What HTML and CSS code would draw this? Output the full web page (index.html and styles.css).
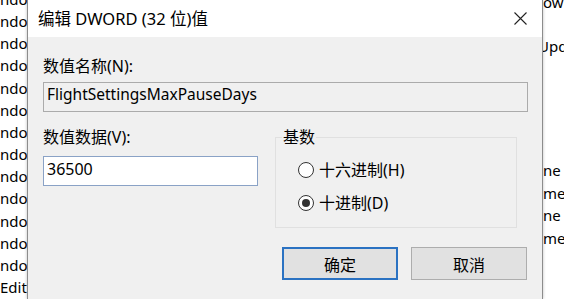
FILE: index.html
```html
<!DOCTYPE html>
<html lang="zh-CN">
<head>
<meta charset="utf-8">
<title>编辑 DWORD (32 位)值</title>
<link rel="stylesheet" href="styles.css">
</head>
<body>
<div class="desk">
  <div class="pane pane-left">
    <div class="row">ndo</div>
    <div class="row">ndo</div>
    <div class="row">ndo</div>
    <div class="row">ndo</div>
    <div class="row">ndo</div>
    <div class="row">ndo</div>
    <div class="row">ndo</div>
    <div class="row">ndo</div>
    <div class="row">ndo</div>
    <div class="row">ndo</div>
    <div class="row">ndo</div>
    <div class="row">ndo</div>
    <div class="row">ndo</div>
    <div class="row">Edit</div>
  </div>
  <div class="dialog">
    <div class="titlebar">
      <span class="title">编辑 DWORD (32 位)值</span>
      <svg class="close" width="13" height="13" viewBox="0 0 13 13">
        <path d="M0.5 0.5 L12.5 12.5 M12.5 0.5 L0.5 12.5" stroke="#222" stroke-width="1.1" fill="none"/>
      </svg>
    </div>
    <div class="body">
      <div class="label">数值名称(N):</div>
      <div class="field field-name">FlightSettingsMaxPauseDays</div>
      <div class="grid">
        <div class="col">
          <div class="label">数值数据(V):</div>
          <div class="field field-data">36500</div>
        </div>
        <div class="group">
          <div class="group-title">基数</div>
          <div class="radio"><span class="circle"></span><span>十六进制(H)</span></div>
          <div class="radio"><span class="circle checked"></span><span>十进制(D)</span></div>
        </div>
      </div>
      <div class="buttons">
        <button class="btn btn-default">确定</button>
        <button class="btn">取消</button>
      </div>
    </div>
  </div>
  <div class="pane pane-right">
    <div class="row row-first">ow</div>
    <div class="row"></div>
    <div class="row row-cut">Upd</div>
    <div class="rgroup">
      <div class="row">ne</div>
      <div class="row">me</div>
      <div class="row">ne</div>
      <div class="row">me</div>
    </div>
  </div>
</div>
</body>
</html>
```

FILE: styles.css
```css
html, body {
  margin: 0;
  padding: 0;
}
body {
  width: 564px;
  height: 299px;
  overflow: hidden;
  background: #ffffff;
  font-family: "Noto Sans", "Noto Sans CJK SC", sans-serif;
  color: #000;
}
.desk {
  display: flex;
  height: 299px;
}
.pane {
  background: #fff;
  overflow: hidden;
  font-size: 15px;
  line-height: 22.17px;
  white-space: nowrap;
}
.pane .row {
  height: 22.17px;
}
.pane-left {
  width: 27px;
  flex: none;
}
.pane-left .row:first-child {
  margin-top: -12px;
}
.pane-right {
  flex: 1;
}
.pane-right .row-first {
  margin-top: -9px;
}
.pane-right .row-cut {
  text-indent: -5px;
}
.pane-right .rgroup {
  margin-top: 102px;
}
.pane-right .rgroup .row {
  height: 22.4px;
}
.dialog {
  width: 516px;
  flex: none;
  box-sizing: border-box;
  border-left: 1px solid #8c8c8c;
  border-right: 1px solid #8c8c8c;
  background: #f0f0f0;
  box-shadow: 0 0 3px rgba(0, 0, 0, 0.25);
  position: relative;
  z-index: 1;
}
.titlebar {
  height: 37px;
  background: #fff;
  display: flex;
  align-items: center;
  padding: 0 15px 0 10px;
}
.title {
  font-size: 16.5px;
  line-height: 20px;
}
.close {
  margin-left: auto;
  display: block;
}
.body {
  padding: 19px 14px 0 15px;
  font-size: 16px;
}
.label {
  line-height: 20px;
}
.field {
  box-sizing: border-box;
  height: 30px;
  border: 1px solid #ababab;
  padding: 0 3px;
  line-height: 22px;
  white-space: nowrap;
}
.field-name {
  margin-top: 6px;
  background: #f0f0f0;
  font-size: 15.5px;
}
.field-data {
  margin-top: 9px;
  background: #fff;
  border-color: #8aa2c6;
  line-height: 24px;
}
.grid {
  display: grid;
  grid-template-columns: 215px 242px;
  column-gap: 17px;
  align-items: start;
  margin-top: 15px;
}
.group {
  margin-top: 10px;
  border: 1px solid #e0e0e0;
  padding: 0 0 14px 22px;
}
.group-title {
  display: table;
  line-height: 20px;
  margin: -11px 0 0 -16px;
  padding: 0 1px;
  background: #f0f0f0;
}
.radio {
  display: flex;
  align-items: center;
  gap: 5px;
  height: 20px;
  line-height: 20px;
  margin-top: 13px;
}
.circle {
  box-sizing: border-box;
  width: 16px;
  height: 16px;
  border: 1px solid #333;
  border-radius: 50%;
  background: #fff;
  display: flex;
  align-items: center;
  justify-content: center;
  flex: none;
}
.circle.checked::after {
  content: "";
  width: 8px;
  height: 8px;
  border-radius: 50%;
  background: #333;
}
.buttons {
  display: flex;
  justify-content: flex-end;
  gap: 13px;
  margin-top: 19px;
  padding-right: 1px;
}
.btn {
  box-sizing: border-box;
  width: 116px;
  height: 33px;
  background: #e1e1e1;
  border: 1px solid #adadad;
  font-family: "Noto Sans CJK SC", sans-serif;
  font-size: 16px;
  color: #000;
  padding: 0;
  margin: 0;
}
.btn-default {
  border: 2px solid #2b72c2;
}
```
